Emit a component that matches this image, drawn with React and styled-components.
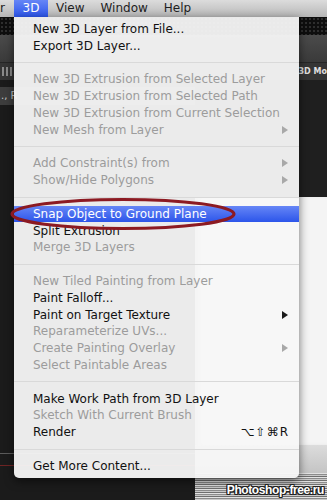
import React from 'react'
import styled, {createGlobalStyle, css} from 'styled-components'

const GlobalStyle = createGlobalStyle`
  html, body {
    margin: 0;
    padding: 0;
    background: #1c1c1c;
  }
  body {
    font-family: "DejaVu Sans", "Noto Sans", sans-serif;
  }
`

const blueGlow = css`
  background: linear-gradient(#6686f6, #2c55ea);
  color: #fff;
`

const items = [
    {label: 'New 3D Layer from File...'},
    {label: 'Export 3D Layer...'},
    'sep',
    {label: 'New 3D Extrusion from Selected Layer', off: true},
    {label: 'New 3D Extrusion from Selected Path', off: true},
    {label: 'New 3D Extrusion from Current Selection', off: true},
    {label: 'New Mesh from Layer', off: true, sub: true},
    'sep',
    {label: 'Add Constraint(s) from', off: true, sub: true},
    {label: 'Show/Hide Polygons', off: true, sub: true},
    'sep',
    {label: 'Snap Object to Ground Plane', hot: true},
    {label: 'Split Extrusion'},
    {label: 'Merge 3D Layers', off: true},
    'sep',
    {label: 'New Tiled Painting from Layer', off: true},
    {label: 'Paint Falloff...'},
    {label: 'Paint on Target Texture', sub: true},
    {label: 'Reparameterize UVs...', off: true},
    {label: 'Create Painting Overlay', off: true, sub: true},
    {label: 'Select Paintable Areas', off: true},
    'sep',
    {label: 'Make Work Path from 3D Layer'},
    {label: 'Sketch With Current Brush', off: true},
    {label: 'Render', keys: '⌥⇧⌘R'},
    'sep',
    {label: 'Get More Content...'},
]

export default function App() {
    return (
        <>
            <GlobalStyle/>
            <Screen>
                <MenuBar>
                    <Cut>r</Cut>
                    <Title $active>3D</Title>
                    <Title>View</Title>
                    <Title>Window</Title>
                    <Title>Help</Title>
                </MenuBar>
                <TitleStrip/>
                <OptionsBar/>
                <TabBar>
                    <Grip/>
                    <Grip/>
                    <Grip/>
                    <TabLabel>3D Mo</TabLabel>
                </TabBar>
                <Workspace>
                    <LeftPane>
                        <Ruler>., R</Ruler>
                        <Fill $h={348}/>
                        <Line $color="#5b5b5b"/>
                        <Fill $h={11}/>
                        <Line $color="#6e2424"/>
                    </LeftPane>
                    <RightPane>
                        <Fill $h={117}/>
                        <Canvas/>
                        <Band/>
                        <Stripes/>
                    </RightPane>
                </Workspace>

                <Menu>
                    {items.map((it, i) => it === 'sep'
                        ? <Separator key={i}/>
                        : <Item key={i} $off={it.off} $hot={it.hot}>
                            <span>{it.label}</span>
                            {it.sub && <Arrow $off={it.off}/>}
                            {it.keys && <Keys>{it.keys}</Keys>}
                        </Item>)}
                    <Ring width="232" height="34" viewBox="0 0 232 34">
                        <ellipse cx="114" cy="17" rx="111" ry="14.5" fill="none" stroke="#8c1a22" strokeWidth="3.2"/>
                    </Ring>
                </Menu>

                <Watermark>Photoshop-free.ru</Watermark>
            </Screen>
        </>
    )
}

const Screen = styled.div`
  position: relative;
  width: 327px;
  height: 500px;
  overflow: hidden;
  display: flex;
  flex-direction: column;
  background: #1c1c1c;
`

const MenuBar = styled.div`
  flex: none;
  height: 17px;
  display: flex;
  background: linear-gradient(#dcdcdc, #b7b7b7);
  font-size: 12px;
  line-height: 17px;
  color: #1e1e1e;
`

const Title = styled.span`
  padding: 0 8px;
  ${p => p.$active && css`
    ${blueGlow};
    width: 34px;
    padding: 0;
    text-align: center;
  `}
`

const Cut = styled.span`
  width: 14px;
`

const TitleStrip = styled.div`
  flex: none;
  height: 18px;
  background-color: #0e0e0e;
  background-image: radial-gradient(#2e2e2e 1px, transparent 1.5px);
  background-size: 4px 4px;
`

const OptionsBar = styled.div`
  flex: none;
  height: 27px;
  background: linear-gradient(#4b4b4b, #3a3a3a);
  border-bottom: 1px solid #262626;
`

const TabBar = styled.div`
  flex: none;
  height: 17px;
  display: flex;
  align-items: center;
  gap: 2px;
  padding: 0 0 0 2px;
  background: #353535;
`

const Grip = styled.span`
  width: 2px;
  height: 9px;
  background: #8a8a8a;
`

const TabLabel = styled.span`
  margin-left: auto;
  white-space: nowrap;
  font-size: 8px;
  font-weight: bold;
  color: #e0e0e0;
`

const Workspace = styled.div`
  flex: 1;
  display: grid;
  grid-template-columns: 195px 1fr;
`

const LeftPane = styled.div`
  display: flex;
  flex-direction: column;
  background: #1b1b1b;
`

const Ruler = styled.div`
  height: 18px;
  margin-top: 7px;
  padding-left: 1px;
  background: #3d3d3d;
  font-size: 10px;
  line-height: 18px;
  color: #c8c8c8;
`

const Fill = styled.div`
  flex: none;
  height: ${p => p.$h}px;
`

const Line = styled.div`
  height: 1px;
  background: ${p => p.$color};
`

const RightPane = styled.div`
  display: flex;
  flex-direction: column;
  background: #1f1f1f;
`

const Canvas = styled.div`
  height: 248px;
  background: #f4f4f4;
  box-shadow: inset 6px 0 6px -4px rgba(0, 0, 0, 0.25);
`

const Band = styled.div`
  height: 28px;
  background: linear-gradient(#dcdcdc, #c4c4c4);
`

const Stripes = styled.div`
  flex: 1;
  background: repeating-linear-gradient(180deg, #e2e2e2 0 1px, #8c8c8c 1px 2px, #c9c9c9 2px 3px, #6f6f6f 3px 4px);
`

const Menu = styled.div`
  position: absolute;
  left: 14px;
  top: 17px;
  width: 285px;
  padding: 3.6px 0 3.5px;
  background: rgba(247, 247, 247, 0.95);
  border-radius: 0 0 5px 5px;
  box-shadow: 0 3px 10px rgba(0, 0, 0, 0.55);
  font-size: 12px;
  color: #111;
`

const Item = styled.div`
  height: 16.75px;
  display: flex;
  align-items: center;
  justify-content: space-between;
  padding: 0 11px 0 19px;
  white-space: nowrap;
  color: ${p => p.$off ? '#9c9c9c' : '#111'};
  ${p => p.$hot && blueGlow};
`

const Arrow = styled.span`
  width: 0;
  height: 0;
  border-left: 6px solid ${p => p.$off ? '#a8a8a8' : '#1a1a1a'};
  border-top: 4px solid transparent;
  border-bottom: 4px solid transparent;
`

const Keys = styled.span`
  letter-spacing: 1px;
  margin-right: -1px;
`

const Separator = styled.div`
  height: 1px;
  margin: 8px 0;
  background: #d9d9d9;
`

const Ring = styled.svg`
  position: absolute;
  left: -5px;
  top: 180px;
  overflow: visible;
  pointer-events: none;
`

const Watermark = styled.div`
  position: absolute;
  right: 3px;
  bottom: 3px;
  font-family: "Liberation Sans", Arial, sans-serif;
  font-weight: bold;
  font-size: 12px;
  letter-spacing: -0.4px;
  color: #fff;
  text-shadow: 1px 0 0 #222, -1px 0 0 #222, 0 1px 0 #222, 0 -1px 0 #222, 1px 1px 0 #222, -1px -1px 0 #222, 1px -1px 0 #222, -1px 1px 0 #222;
`
